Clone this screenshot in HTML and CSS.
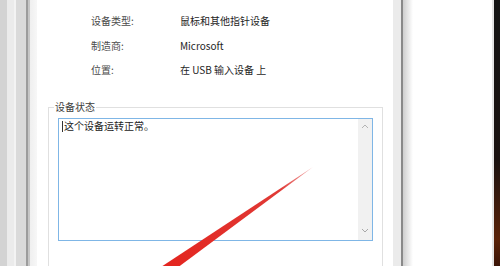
FILE: index.html
```html
<!DOCTYPE html>
<html lang="zh-CN">
<head>
    <meta charset="UTF-8">
    <meta name="viewport" content="width=device-width, initial-scale=1.0">
    <title>设备属性</title>
    <link rel="stylesheet" href="styles.css">
</head>
<body>
    <div class="left-edge"></div>
    <div class="dialog">
        <div class="props">
            <span class="label">设备类型:</span>
            <span class="value">鼠标和其他指针设备</span>
            <span class="label">制造商:</span>
            <span class="value">Microsoft</span>
            <span class="label">位置:</span>
            <span class="value">在 USB 输入设备 上</span>
        </div>
        <fieldset class="status-group">
            <legend>设备状态</legend>
            <div class="status-box">
                <div class="status-text"><span class="caret"></span>这个设备运转正常。</div>
                <div class="scrollbar">
                    <svg width="14" height="10" viewBox="0 0 14 10"><path d="M4 6 L7 3 L10 6" fill="none" stroke="#b4b4b4" stroke-width="1"/></svg>
                    <svg width="14" height="10" viewBox="0 0 14 10"><path d="M4 4 L7 7 L10 4" fill="none" stroke="#a8a8a8" stroke-width="1"/></svg>
                </div>
            </div>
        </fieldset>
    </div>
    <div class="frame"></div>
    <div class="panel"></div>
    <div class="edge"></div>

    <svg class="arrow" width="500" height="266" viewBox="0 0 500 266">
        <defs>
            <linearGradient id="stroke" x1="313" y1="167" x2="150" y2="281" gradientUnits="userSpaceOnUse">
                <stop offset="0" stop-color="#f3b0b0"/>
                <stop offset="0.2" stop-color="#e03a36"/>
                <stop offset="1" stop-color="#e4221c"/>
            </linearGradient>
        </defs>
        <polygon points="313,167 153.5,285.5 146.5,276.5" fill="url(#stroke)"/>
    </svg>
</body>
</html>
```

FILE: styles.css
```css
body {
    margin: 0;
    width: 500px;
    height: 266px;
    overflow: hidden;
    display: flex;
    position: relative;
    font-family: "Noto Sans CJK SC", "Noto Sans", sans-serif;
    font-size: 10px;
    background-color: #fff;
}
.left-edge {
    width: 37px;
    flex-shrink: 0;
    background: linear-gradient(to right,
        #d3d3d3 0, #d3d3d3 7px,
        #ebebeb 7px, #ebebeb 14px,
        #f3f3f3 14px, #f3f3f3 16px,
        #dadada 16px, #dadada 26px,
        #9c9c9c 26px, #9c9c9c 28px,
        #c6c6c6 28px, #c6c6c6 30px,
        #efefef 30px, #f7f7f7 37px);
}
.dialog {
    width: 356px;
    flex-shrink: 0;
    background-color: #fff;
}
.props {
    display: grid;
    grid-template-columns: 89px auto;
    row-gap: 10.5px;
    padding: 14px 0 0 54px;
    line-height: 14px;
}
.label {
    color: #4a4a4a;
}
.value {
    color: #1e1e1e;
}
.status-group {
    box-sizing: border-box;
    width: 334px;
    height: 165px;
    margin: 24px 0 0 11px;
    padding: 0 9px;
    border: 1px solid #e0e0e0;
    border-bottom: none;
}
.status-group legend {
    margin-left: -4px;
    padding: 0 1px;
    line-height: 12px;
    color: #3c3c3c;
}
.status-box {
    box-sizing: border-box;
    width: 315px;
    height: 123px;
    margin-top: 5px;
    border: 1px solid #7fb6e6;
    display: flex;
}
.status-text {
    flex: 1;
    padding: 1px 3px;
    line-height: 12px;
    color: #222;
}
.caret {
    display: inline-block;
    width: 1px;
    height: 11px;
    margin-right: 1px;
    vertical-align: -2px;
    background-color: #333;
}
.scrollbar {
    width: 14px;
    background-color: #f1f1f1;
    display: flex;
    flex-direction: column;
    justify-content: space-between;
    padding: 3px 0 5px;
}
.frame {
    width: 20px;
    flex-shrink: 0;
    background: linear-gradient(to right,
        #ebebeb 0, #ebebeb 8px,
        #8a8a8a 8px, #8a8a8a 10px,
        #cfcfcf 10px, #fff 20px);
}
.panel {
    width: 81px;
    flex-shrink: 0;
    background: linear-gradient(to right, #fff 0, #fff 79px, #e4e4e4 79px);
}
.edge {
    width: 6px;
    flex-shrink: 0;
    background: linear-gradient(to bottom, #151515 0, #1a1210 60%, #5a2208 90%, #3a1406 100%);
}
.arrow {
    position: absolute;
    top: 0;
    left: 0;
    pointer-events: none;
}
```
